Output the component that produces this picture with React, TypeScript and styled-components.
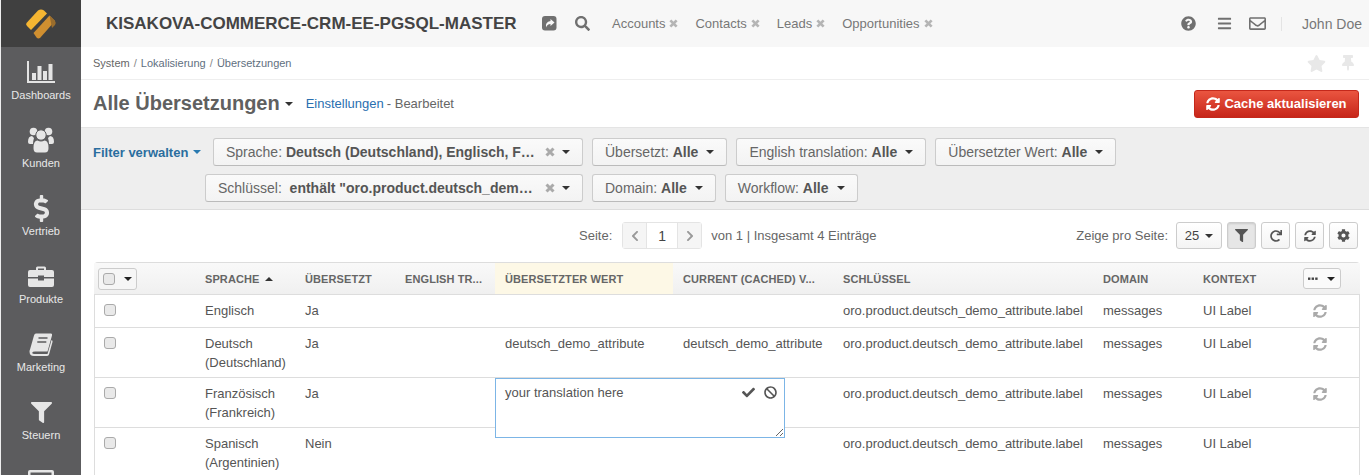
import React from 'react'
import styled, { createGlobalStyle } from 'styled-components'
import {
  FaBan,
  FaBars,
  FaCheck,
  FaChevronLeft,
  FaChevronRight,
  FaCog,
  FaDollarSign,
  FaFilter,
  FaQuestionCircle,
  FaRedo,
  FaRegEnvelope,
  FaSearch,
  FaStar,
  FaSyncAlt,
  FaThumbtack
} from 'react-icons/fa'

const GlobalStyle = createGlobalStyle`
  html, body {
    margin: 0;
    height: 475px;
    overflow: hidden;
    background: #fff;
    font-family: "Liberation Sans", Arial, sans-serif;
    font-size: 13px;
    color: #555;
  }
  * { box-sizing: border-box; }
`

const LogoMark = () => (
  <svg width="32" height="32" viewBox="0 0 32 32">
    <path d="M1.5 15 L13 2.5 Q16 0.5 19 2.5 L22 5.5 L6 22 L2 18 Q0.5 16.5 1.5 15 Z" fill="#f6b632" />
    <path d="M24.5 7.5 L30 13 L15 30 Q13 31 11.5 29.5 L8.5 25 Z" fill="#d08f30" />
    <path d="M24.5 7.5 L30 13 Q31.5 15 30 17 L27 20 Z" fill="#9a6d2c" />
  </svg>
)

const ChartIcon = () => (
  <svg width="28" height="22" viewBox="0 0 28 22" fill="#e4e4e4">
    <rect x="0" y="0" width="2" height="22" />
    <rect x="0" y="20" width="28" height="2" />
    <rect x="5" y="12" width="4" height="7" />
    <rect x="10.5" y="5" width="4" height="14" />
    <rect x="16" y="10" width="4" height="9" />
    <rect x="21.5" y="3" width="4" height="16" />
  </svg>
)

const UsersIcon = () => (
  <svg width="28" height="26" viewBox="0 0 28 26" fill="#e6e6e6">
    <circle cx="6.5" cy="4.5" r="3.8" />
    <circle cx="21.5" cy="4.5" r="3.8" />
    <path d="M1 15 Q1 9 5 9 L7 11 Q6 14 6 17 L3 17 Q1 17 1 15 Z" />
    <path d="M27 15 Q27 9 23 9 L21 11 Q22 14 22 17 L25 17 Q27 17 27 15 Z" />
    <circle cx="14" cy="8" r="5.2" stroke="#5c5c5e" strokeWidth="1" />
    <path d="M6.5 21 Q6.5 13.5 10.5 13.5 Q14 15.5 17.5 13.5 Q21.5 13.5 21.5 21 Q21.5 25.5 18 25.5 L10 25.5 Q6.5 25.5 6.5 21 Z" />
  </svg>
)

const BriefcaseIcon = () => (
  <svg width="26" height="21" viewBox="0 0 26 21" fill="#e6e6e6">
    <path d="M8 4 V2 Q8 0.5 9.5 0.5 H16.5 Q18 0.5 18 2 V4 H16 V2.5 H10 V4 Z" />
    <path d="M2 4 H24 Q26 4 26 6 V11 H16 V9.5 H10 V11 H0 V6 Q0 4 2 4 Z" />
    <path d="M0 12.5 H10 V14.5 H16 V12.5 H26 V19 Q26 21 24 21 H2 Q0 21 0 19 Z" />
  </svg>
)

const BookIcon = () => (
  <svg width="24" height="23" viewBox="0 0 24 23" fill="none">
    <path
      d="M7 0.5 H22 Q23.5 0.5 23 2.5 L18.5 18.5 H6 Q3.5 18.5 3.2 19.8 Q3.2 21 5.5 21 H18.5 L22.5 7 Q24 7.5 23.5 9 L20 21.5 Q19.5 23 17.5 23 H5 Q0.5 23 0.5 18.5 Q0.5 17.5 1 16.5 L5 2.5 Q5.5 0.5 7 0.5 Z"
      fill="#e6e6e6"
    />
    <path d="M9.5 5 H18.5 M8.3 9 H17.3" stroke="#5c5c5e" strokeWidth="1.5" />
  </svg>
)

const KeyboardIcon = () => (
  <svg width="26" height="20" viewBox="0 0 26 20" fill="#e6e6e6">
    <path
      fillRule="evenodd"
      d="M2 0 H24 Q26 0 26 2 V18 Q26 20 24 20 H2 Q0 20 0 18 V2 Q0 0 2 0 Z M2.5 2.5 V17.5 H23.5 V2.5 Z"
    />
    <rect x="5" y="5" width="2" height="2" />
    <rect x="9" y="5" width="2" height="2" />
    <rect x="13" y="5" width="2" height="2" />
    <rect x="17" y="5" width="2" height="2" />
  </svg>
)

const ShareIcon = () => (
  <svg width="15" height="15" viewBox="0 0 15 15">
    <rect width="14.5" height="14.5" rx="3" fill="#707070" />
    <path d="M8.5 3 L12.5 6.5 L8.5 10 V8 Q5 8 4.2 11.5 Q2.8 6 8.5 5 Z" fill="#f7f7f7" />
  </svg>
)

const CrossIcon = ({ size = 9, color = '#b5b5b5' }: { size?: number; color?: string }) => (
  <svg width={size} height={size} viewBox="0 0 10 10" style={{ flex: 'none' }}>
    <path d="M1.5 1.5 L8.5 8.5 M8.5 1.5 L1.5 8.5" stroke={color} strokeWidth="3" />
  </svg>
)

const DotsIcon = () => (
  <svg width="10" height="3" viewBox="0 0 10 3" fill="#444">
    <rect x="0" y="0.5" width="2.4" height="2.4" />
    <rect x="3.6" y="0.5" width="2.4" height="2.4" />
    <rect x="7.2" y="0.5" width="2.4" height="2.4" />
  </svg>
)

const navItems = [
  { key: 'dash', label: 'Dashboards', icon: <ChartIcon /> },
  { key: 'kunden', label: 'Kunden', icon: <UsersIcon /> },
  { key: 'vertrieb', label: 'Vertrieb', icon: <FaDollarSign size={27} /> },
  { key: 'produkte', label: 'Produkte', icon: <BriefcaseIcon /> },
  { key: 'marketing', label: 'Marketing', icon: <BookIcon /> },
  { key: 'steuern', label: 'Steuern', icon: <FaFilter size={21} /> },
  { key: 'more', label: '', icon: <KeyboardIcon /> }
]

const quickTabs = ['Accounts', 'Contacts', 'Leads', 'Opportunities']

const rows = [
  { id: 'en', lang: 'Englisch', done: 'Ja', value: '', cached: '', refresh: true },
  {
    id: 'de',
    lang: 'Deutsch (Deutschland)',
    done: 'Ja',
    value: 'deutsch_demo_attribute',
    cached: 'deutsch_demo_attribute',
    refresh: true
  },
  { id: 'fr', lang: 'Französisch (Frankreich)', done: 'Ja', value: '', cached: '', refresh: true, editing: true },
  { id: 'es', lang: 'Spanisch (Argentinien)', done: 'Nein', value: '', cached: '', refresh: false }
]

const App: React.FC = () => {
  return (
    <Page>
      <GlobalStyle />
      <Sidebar>
        <Logo>
          <LogoMark />
        </Logo>
        {navItems.map((item) => (
          <NavItem key={item.key}>
            <NavIcon>{item.icon}</NavIcon>
            {item.label}
          </NavItem>
        ))}
      </Sidebar>
      <Main>
        <TopBar>
          <AppName>KISAKOVA-COMMERCE-CRM-EE-PGSQL-MASTER</AppName>
          <TopIcons>
            <ShareIcon />
            <FaSearch size={15} />
          </TopIcons>
          <Tabs>
            {quickTabs.map((tab) => (
              <Tab key={tab}>
                {tab}
                <CrossIcon />
              </Tab>
            ))}
          </Tabs>
          <TopRight>
            <FaQuestionCircle size={15} />
            <FaBars size={15} />
            <MailIcon size={17} />
            <UserName>John Doe</UserName>
          </TopRight>
        </TopBar>
        <BreadcrumbBar>
          <Crumbs>
            System <Sep>/</Sep> <CrumbLink>Lokalisierung</CrumbLink> <Sep>/</Sep> <CrumbLink>Übersetzungen</CrumbLink>
          </Crumbs>
          <PinIcons>
            <FaStar size={19} />
            <FaThumbtack size={16} />
          </PinIcons>
        </BreadcrumbBar>
        <TitleBar>
          <Title>Alle Übersetzungen</Title>
          <Caret $color="#333" $gap="5px" />
          <TitleLink>Einstellungen</TitleLink>
          <TitleStatus>- Bearbeitet</TitleStatus>
          <DangerButton>
            <FaSyncAlt size={14} />
            Cache aktualisieren
          </DangerButton>
        </TitleBar>
        <FilterBar>
          <FilterRow>
            <ManageFilters>
              Filter verwalten
              <Caret $color="#2a7ab0" $gap="5px" />
            </ManageFilters>
            <FilterButton $width="370px">
              <FilterText>
                Sprache: <b>Deutsch (Deutschland), Englisch, F…</b>
              </FilterText>
              <CrossIcon size={10} color="#aaa" />
              <Caret $color="#333" $gap="7px" />
            </FilterButton>
            <FilterButton>
              <FilterText>
                Übersetzt: <b>Alle</b>
              </FilterText>
              <Caret $color="#333" $gap="8px" />
            </FilterButton>
            <FilterButton>
              <FilterText>
                English translation: <b>Alle</b>
              </FilterText>
              <Caret $color="#333" $gap="8px" />
            </FilterButton>
            <FilterButton>
              <FilterText>
                Übersetzter Wert: <b>Alle</b>
              </FilterText>
              <Caret $color="#333" $gap="8px" />
            </FilterButton>
          </FilterRow>
          <FilterRow $indent="112px">
            <FilterButton $width="378px">
              <FilterText>
                Schlüssel: &nbsp;<b>enthält "oro.product.deutsch_dem…</b>
              </FilterText>
              <CrossIcon size={10} color="#aaa" />
              <Caret $color="#333" $gap="7px" />
            </FilterButton>
            <FilterButton>
              <FilterText>
                Domain: <b>Alle</b>
              </FilterText>
              <Caret $color="#333" $gap="8px" />
            </FilterButton>
            <FilterButton>
              <FilterText>
                Workflow: <b>Alle</b>
              </FilterText>
              <Caret $color="#333" $gap="8px" />
            </FilterButton>
          </FilterRow>
        </FilterBar>
        <Toolbar>
          <PagerLabel>Seite:</PagerLabel>
          <Pager>
            <PagerArrow>
              <FaChevronLeft size={12} />
            </PagerArrow>
            <PagerInput>1</PagerInput>
            <PagerArrow>
              <FaChevronRight size={12} />
            </PagerArrow>
          </Pager>
          <PagerInfo>von 1 | Insgesamt 4 Einträge</PagerInfo>
          <ToolbarRight>
            <PagerLabel>Zeige pro Seite:</PagerLabel>
            <PageSize>
              25
              <Caret $color="#333" $gap="6px" />
            </PageSize>
            <ToolButton $active>
              <FaFilter size={13} />
            </ToolButton>
            <ToolButton>
              <FaRedo size={12} />
            </ToolButton>
            <ToolButton>
              <FaSyncAlt size={12} />
            </ToolButton>
            <ToolButton>
              <FaCog size={13} />
            </ToolButton>
          </ToolbarRight>
        </Toolbar>
        <GridWrap>
          <Grid>
            <colgroup>
              {[101, 100, 100, 100, 178, 160, 260, 100, 100, 67].map((w, i) => (
                <col key={i} width={w} />
              ))}
            </colgroup>
            <thead>
              <tr>
                <HeadCell $first>
                  <SelectAll>
                    <CheckBox />
                    <Caret $color="#222" $gap="9px" />
                  </SelectAll>
                </HeadCell>
                <HeadCell>
                  SPRACHE
                  <CaretUp />
                </HeadCell>
                <HeadCell>ÜBERSETZT</HeadCell>
                <HeadCell>ENGLISH TR...</HeadCell>
                <HeadCell $highlight>ÜBERSETZTER WERT</HeadCell>
                <HeadCell>CURRENT (CACHED) V...</HeadCell>
                <HeadCell>SCHLÜSSEL</HeadCell>
                <HeadCell>DOMAIN</HeadCell>
                <HeadCell>KONTEXT</HeadCell>
                <HeadCell>
                  <ColumnsMenu>
                    <DotsIcon />
                    <Caret $color="#222" $gap="9px" />
                  </ColumnsMenu>
                </HeadCell>
              </tr>
            </thead>
            <tbody>
              {rows.map((row) => (
                <tr key={row.id}>
                  <Cell $first>
                    <CheckBox />
                  </Cell>
                  <Cell>{row.lang}</Cell>
                  <Cell>{row.done}</Cell>
                  <Cell />
                  <Cell>
                    {row.value}
                    {row.editing && (
                      <Editor>
                        <EditorInput readOnly defaultValue="your translation here" />
                        <EditorActions>
                          <FaCheck size={13} />
                          <FaBan size={13} />
                        </EditorActions>
                      </Editor>
                    )}
                  </Cell>
                  <Cell>{row.cached}</Cell>
                  <Cell>oro.product.deutsch_demo_attribute.label</Cell>
                  <Cell>messages</Cell>
                  <Cell>UI Label</Cell>
                  <ActionCell>{row.refresh && <FaSyncAlt size={14} />}</ActionCell>
                </tr>
              ))}
            </tbody>
          </Grid>
        </GridWrap>
      </Main>
    </Page>
  )
}

const Page = styled.div`
  display: flex;
  height: 475px;
  overflow: hidden;
`

const Sidebar = styled.nav`
  flex: none;
  width: 81px;
  border-left: 1px solid #eee;
  background: #5c5c5e;
  overflow: hidden;
`

const Logo = styled.div`
  display: flex;
  align-items: center;
  justify-content: center;
  height: 47px;
  background: #404040;
`

const NavItem = styled.div`
  display: flex;
  flex-direction: column;
  align-items: center;
  height: 68px;
  padding-top: 10px;
  font-size: 11px;
  line-height: 14px;
  color: #e8e8e8;
`

const NavIcon = styled.div`
  display: flex;
  align-items: center;
  justify-content: center;
  height: 30px;
  margin-bottom: 1px;
  color: #e6e6e6;
`

const Main = styled.main`
  flex: 1;
  min-width: 0;
  display: flex;
  flex-direction: column;
`

const TopBar = styled.header`
  display: flex;
  align-items: center;
  flex: none;
  height: 47px;
  padding-left: 25px;
  background: #f7f7f7;
`

const AppName = styled.div`
  width: 436px;
  font-size: 17px;
  font-weight: bold;
  color: #444;
`

const TopIcons = styled.div`
  display: flex;
  align-items: center;
  gap: 18px;
  color: #707070;
`

const Tabs = styled.div`
  display: flex;
  gap: 17px;
  margin-left: 22px;
`

const Tab = styled.span`
  display: flex;
  align-items: center;
  gap: 4px;
  font-size: 13px;
  color: #777;
`

const TopRight = styled.div`
  display: flex;
  align-items: center;
  gap: 21px;
  margin-left: auto;
  padding-right: 7px;
  color: #707070;
`

const MailIcon = styled(FaRegEnvelope)`
  margin-left: -4px;
`

const UserName = styled.span`
  margin-left: -6px;
  padding-left: 20px;
  border-left: 1px solid #e4e4e4;
  font-size: 14px;
  line-height: 14px;
  color: #777;
`

const BreadcrumbBar = styled.div`
  display: flex;
  align-items: center;
  justify-content: space-between;
  flex: none;
  height: 33px;
  padding: 0 13px 0 12px;
  border-bottom: 1px solid #eee;
`

const Crumbs = styled.div`
  font-size: 11px;
  color: #666;
`

const Sep = styled.span`
  margin: 0 1px;
  color: #888;
`

const CrumbLink = styled.span`
  color: #5f6f80;
`

const PinIcons = styled.div`
  display: flex;
  align-items: center;
  gap: 14px;
  color: #e8e8e8;
`

const TitleBar = styled.div`
  display: flex;
  align-items: center;
  flex: none;
  height: 48px;
  padding: 0 10px 0 12px;
  border-bottom: 1px solid #e4e4e4;
`

const Title = styled.h1`
  margin: 0;
  font-size: 20px;
  font-weight: bold;
  color: #606060;
`

const TitleLink = styled.a`
  margin-left: 13px;
  font-size: 13px;
  color: #2a6fb0;
`

const TitleStatus = styled.span`
  margin-left: 3px;
  font-size: 13px;
  color: #666;
`

const DangerButton = styled.button`
  display: flex;
  align-items: center;
  justify-content: center;
  gap: 4px;
  width: 165px;
  height: 28px;
  margin-left: auto;
  padding: 0;
  border: 1px solid #c4281b;
  border-radius: 3px;
  background: linear-gradient(#ea5540, #c7261a);
  font: bold 13px "Liberation Sans", Arial, sans-serif;
  color: #fff;
`

const FilterBar = styled.div`
  display: flex;
  flex-direction: column;
  gap: 8px;
  flex: none;
  height: 82px;
  padding: 10px 0 0 12px;
  background: #eee;
  border-bottom: 1px solid #ddd;
`

const FilterRow = styled.div<{ $indent?: string }>`
  display: flex;
  align-items: center;
  gap: 9px;
  padding-left: ${(p) => p.$indent || 0};
`

const ManageFilters = styled.span`
  display: flex;
  align-items: center;
  width: 111px;
  font-size: 13px;
  font-weight: bold;
  color: #2a6d9e;
`

const FilterButton = styled.div<{ $width?: string }>`
  display: flex;
  align-items: center;
  width: ${(p) => p.$width || 'auto'};
  height: 28px;
  padding: 0 12px;
  border: 1px solid #ccc;
  border-bottom-color: #bbb;
  border-radius: 3px;
  background: linear-gradient(#fafafa, #f3f3f3);
  white-space: nowrap;
`

const FilterText = styled.span`
  flex: 1;
  font-size: 14px;
  color: #666;
  b {
    color: #555;
  }
`

const Caret = styled.span<{ $color: string; $gap: string }>`
  flex: none;
  display: inline-block;
  width: 0;
  height: 0;
  margin-left: ${(p) => p.$gap};
  border-left: 4px solid transparent;
  border-right: 4px solid transparent;
  border-top: 4px solid ${(p) => p.$color};
`

const CaretUp = styled.span`
  display: inline-block;
  width: 0;
  height: 0;
  margin-left: 5px;
  vertical-align: 2px;
  border-left: 4px solid transparent;
  border-right: 4px solid transparent;
  border-bottom: 4px solid #333;
`

const Toolbar = styled.div`
  display: flex;
  align-items: center;
  flex: none;
  height: 52px;
  padding: 0 11px 1px 498px;
`

const PagerLabel = styled.span`
  font-size: 13px;
  color: #666;
`

const Pager = styled.div`
  display: flex;
  height: 27px;
  margin-left: 10px;
  border: 1px solid #e4e4e4;
  border-radius: 3px;
  background: #fff;
`

const PagerArrow = styled.span`
  display: flex;
  align-items: center;
  justify-content: center;
  width: 23px;
  background: #f5f5f5;
  color: #999;
`

const PagerInput = styled.span`
  display: flex;
  align-items: center;
  justify-content: center;
  width: 32px;
  border-left: 1px solid #e4e4e4;
  border-right: 1px solid #e4e4e4;
  font-size: 14px;
  color: #444;
`

const PagerInfo = styled.span`
  margin-left: 9px;
  font-size: 13px;
  color: #666;
`

const ToolbarRight = styled.div`
  display: flex;
  align-items: center;
  gap: 5px;
  margin-left: auto;
`

const PageSize = styled.div`
  display: flex;
  align-items: center;
  justify-content: center;
  width: 46px;
  height: 27px;
  margin-left: 3px;
  border: 1px solid #ccc;
  border-radius: 3px;
  background: linear-gradient(#fff, #f4f4f4);
  font-size: 13px;
  color: #444;
`

const ToolButton = styled.button<{ $active?: boolean }>`
  display: flex;
  align-items: center;
  justify-content: center;
  width: 29px;
  height: 27px;
  padding: 0;
  border: 1px solid #ccc;
  border-radius: 3px;
  background: ${(p) => (p.$active ? '#e6e6e6' : 'linear-gradient(#fff, #f4f4f4)')};
  box-shadow: ${(p) => (p.$active ? 'inset 0 1px 2px rgba(0,0,0,.12)' : 'none')};
  color: #555;
`

const GridWrap = styled.div`
  flex: none;
  width: 1266px;
  margin-left: 13px;
  border: 1px solid #ddd;
  border-bottom: none;
  border-radius: 4px 4px 0 0;
`

const Grid = styled.table`
  width: 1266px;
  margin: 0 -1px;
  border-spacing: 0;
  table-layout: fixed;
`

const HeadCell = styled.th<{ $first?: boolean; $highlight?: boolean }>`
  height: 32px;
  padding: ${(p) => (p.$first ? '0 0 0 4px' : '0 10px')};
  border-bottom: 1px solid #ddd;
  background: ${(p) => (p.$highlight ? '#fdf8e6' : 'linear-gradient(#f9f9f9, #f0f0f0)')};
  font-size: 11px;
  font-weight: bold;
  letter-spacing: 0.1px;
  text-align: left;
  color: #666;
  white-space: nowrap;
  overflow: hidden;
`

const SelectAll = styled.div`
  display: inline-flex;
  align-items: center;
  width: 39px;
  height: 22px;
  padding-left: 4px;
  border: 1px solid #ccc;
  border-radius: 3px;
  background: #f6f6f6;
`

const ColumnsMenu = styled.div`
  display: inline-flex;
  align-items: center;
  width: 38px;
  height: 21px;
  padding-left: 4px;
  border: 1px solid #ccc;
  border-radius: 3px;
  background: #fafafa;
`

const CheckBox = styled.span`
  display: block;
  flex: none;
  width: 12px;
  height: 12px;
  border: 1px solid #aaa;
  border-radius: 3px;
  background: #e9e9e9;
`

const Cell = styled.td<{ $first?: boolean }>`
  position: relative;
  height: 33px;
  padding: ${(p) => (p.$first ? '9px 0 0 10px' : '6px 10px 5px')};
  border-bottom: 1px solid #ddd;
  vertical-align: top;
  font-size: 13px;
  line-height: 19px;
  color: #555;
`

const ActionCell = styled(Cell)`
  padding: 9px 0 0 20px;
  color: #aaa;
`

const Editor = styled.div`
  position: absolute;
  top: 0;
  left: 0;
  z-index: 2;
  width: 290px;
  height: 60px;
`

const EditorInput = styled.textarea`
  display: block;
  width: 100%;
  height: 100%;
  padding: 4px 9px;
  border: 1px solid #7cb5e6;
  outline: none;
  resize: both;
  background: #fff;
  font: 13px/19px "Liberation Sans", Arial, sans-serif;
  color: #555;
`

const EditorActions = styled.div`
  position: absolute;
  top: 8px;
  right: 8px;
  display: flex;
  gap: 9px;
  color: #555;
`

export default App
